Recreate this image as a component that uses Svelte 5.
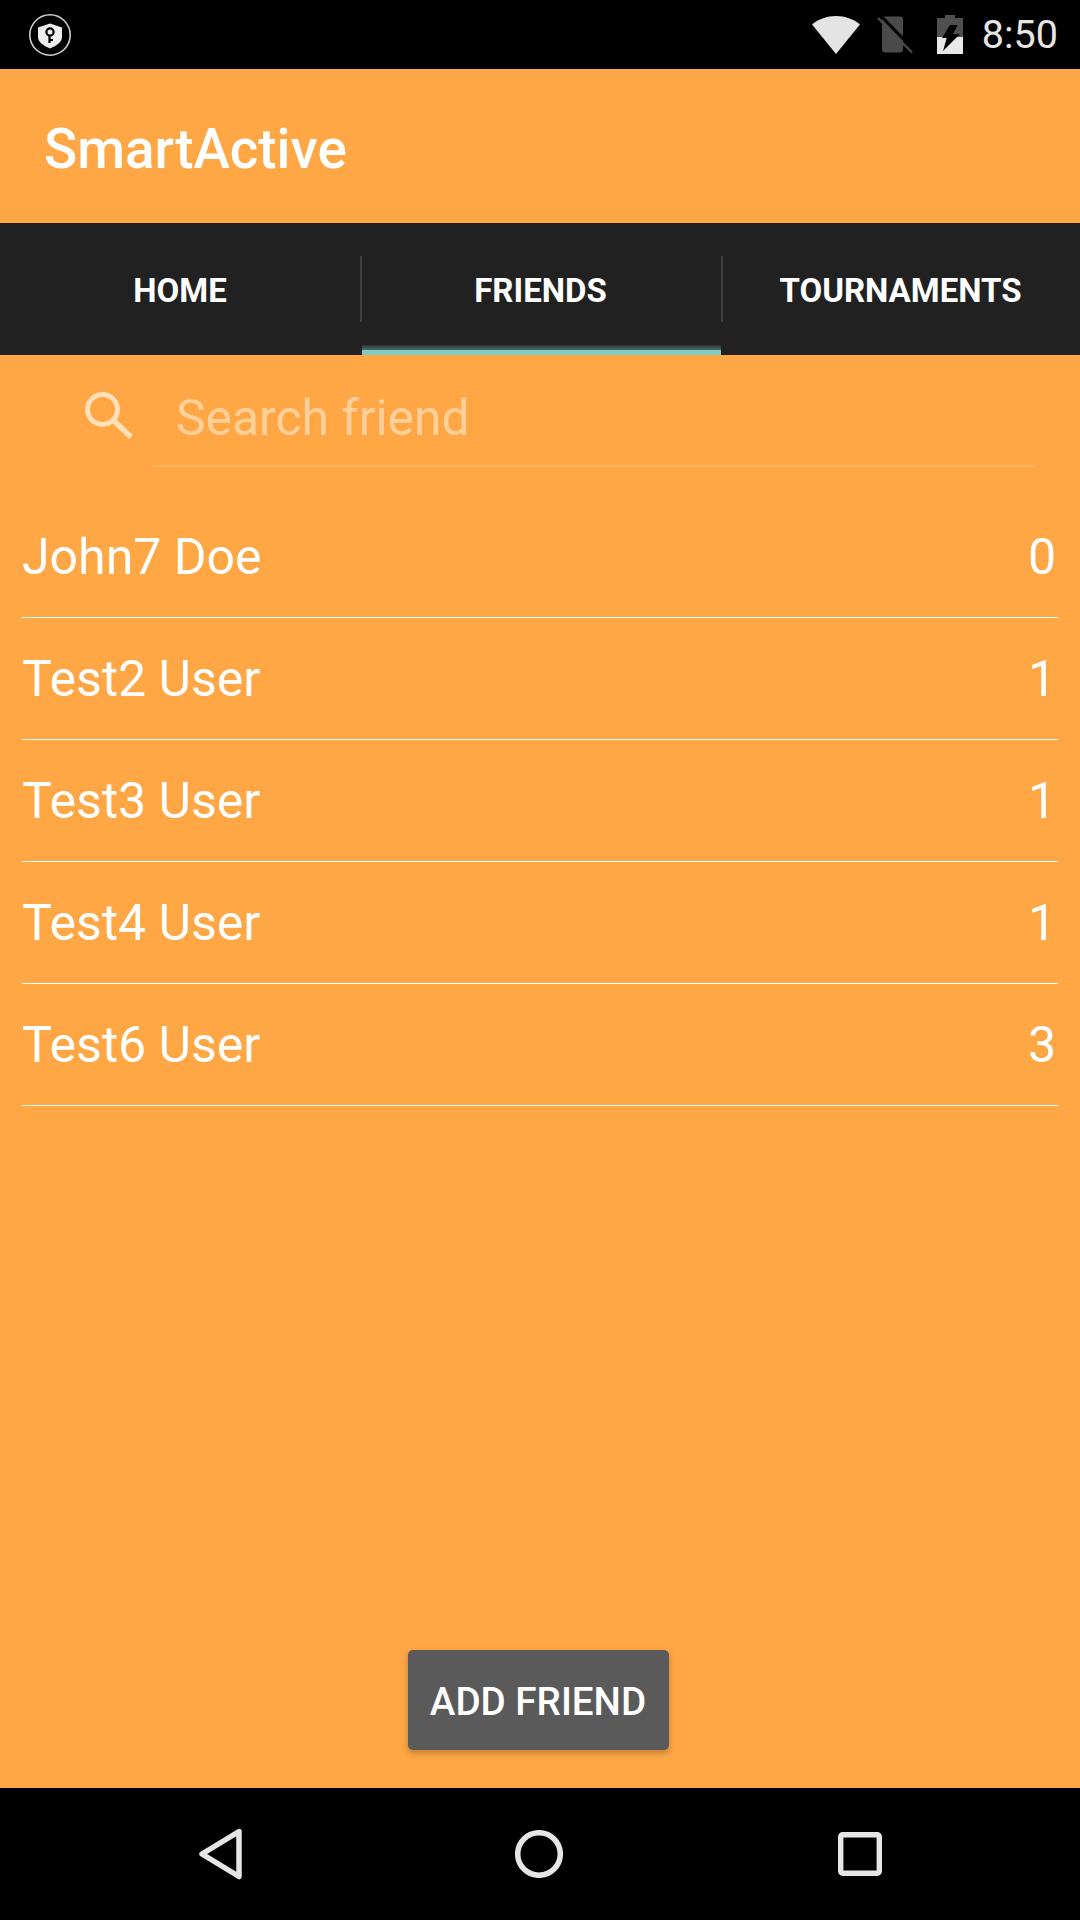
<script>
  const friends = [
    { name: 'John7 Doe', score: 0 },
    { name: 'Test2 User', score: 1 },
    { name: 'Test3 User', score: 1 },
    { name: 'Test4 User', score: 1 },
    { name: 'Test6 User', score: 3 }
  ];
  const tabs = ['HOME', 'FRIENDS', 'TOURNAMENTS'];
</script>

<div class="screen">
  <div class="status">
    <svg class="shield" width="44" height="44" viewBox="0 0 44 44">
      <circle cx="22" cy="22" r="20.2" fill="none" stroke="#cfcfcf" stroke-width="1.6" />
      <path d="M10 14.500 22 10.500l12 4v9.500c0 5-5 8.500-12 11.500-7-3-12-6.500-12-11.500z" fill="#eee" />
      <circle cx="22" cy="19" r="3.600" fill="none" stroke="#000" stroke-width="2.200" />
      <path d="M21.500 22v8M22 27h3" fill="none" stroke="#000" stroke-width="2.200" />
    </svg>
    <div class="spacer"></div>
    <svg class="wifi" width="48" height="38" viewBox="0 0 48 38">
      <path d="M0 8.500C6.500 3 15 0 24 0s17.500 3 24 8.500L24 38z" fill="#e4e4e4" />
    </svg>
    <svg class="sim" width="36" height="38" viewBox="0 0 36 38">
      <path d="M5 3.500a3 3 0 0 1 3-3h15a3 3 0 0 1 3 3v30a3 3 0 0 1-3 3H8a3 3 0 0 1-3-3z" fill="#4a4a4a" />
      <path d="M4 0 36 33" stroke="#000" stroke-width="3" fill="none" />
      <path d="M1 2 35 36.500" stroke="#4a4a4a" stroke-width="2.400" fill="none" />
    </svg>
    <svg class="battery" width="26" height="39" viewBox="0 0 26 39">
      <path d="M8 0h10v3h8v36H0V3h8z" fill="#4f4f4f" />
      <path d="M0 22h26v17H0z" fill="#e8e8e8" />
      <path d="M13 10h7.700L16 19h7L6 36l3.700-13H5z" fill="#000" />
    </svg>
    <span class="time">8:50</span>
  </div>

  <header class="toolbar">SmartActive</header>

  <nav class="tabs">
    {#each tabs as tab, i}
      <div class="tab" class:active={i === 1} class:divided={i > 0}>
        <span>{tab}</span>
      </div>
    {/each}
  </nav>

  <main class="content">
    <div class="search">
      <svg class="search-icon" width="50" height="50" viewBox="0 0 50 50">
        <circle cx="17.500" cy="17.500" r="15" fill="none" stroke="#ffe0b8" stroke-width="5" />
        <path d="M28 28 46 45" stroke="#ffe0b8" stroke-width="5.500" fill="none" />
      </svg>
      <div class="field">Search friend</div>
    </div>

    <ul class="list">
      {#each friends as f}
        <li>
          <span>{f.name}</span>
          <span>{f.score}</span>
        </li>
      {/each}
    </ul>

    <div class="actions">
      <button>ADD FRIEND</button>
    </div>
  </main>

  <footer class="nav">
    <svg width="46" height="52" viewBox="0 0 46 52">
      <path d="M41 3.500 4 26l37 22.500z" fill="none" stroke="#e6e6e6" stroke-width="5.500" stroke-linejoin="round" />
    </svg>
    <svg width="48" height="48" viewBox="0 0 48 48">
      <circle cx="24" cy="24" r="21.300" fill="none" stroke="#e6e6e6" stroke-width="5.500" />
    </svg>
    <svg width="44" height="44" viewBox="0 0 44 44">
      <rect x="2.700" y="2.700" width="38.600" height="38.600" rx="2" fill="none" stroke="#e6e6e6" stroke-width="5.400" />
    </svg>
  </footer>
</div>

<style>
  :global(body) { margin: 0; background: #ffa745; }
  .screen {
    width: 1080px;
    height: 1920px;
    display: flex;
    flex-direction: column;
    font-family: Roboto, "Liberation Sans", sans-serif;
    background: #ffa745;
    color: #fff;
    overflow: hidden;
  }
  .status {
    height: 69px;
    flex: none;
    background: #000;
    display: flex;
    align-items: center;
    padding: 0 22px 0 28px;
    box-sizing: border-box;
  }
  .spacer { flex: 1; }
  .wifi { margin-right: 17px; }
  .sim { margin-right: 24px; }
  .battery { margin-right: 19px; }
  .time { font-size: 39.500px; color: #e6e6e6; }
  .toolbar {
    height: 154px;
    flex: none;
    display: flex;
    align-items: center;
    padding: 6px 0 0 44px;
    box-sizing: border-box;
    font-size: 54.800px;
    font-weight: 500;
  }
  .tabs {
    height: 132px;
    flex: none;
    background: #212121;
    display: grid;
    grid-template-columns: 360px 361px 359px;
  }
  .tab {
    position: relative;
    display: flex;
    align-items: center;
    justify-content: center;
    padding-top: 2px;
    box-sizing: border-box;
    font-size: 33px;
    font-weight: 700;
  }
  .tab.divided::before {
    content: "";
    position: absolute;
    left: 0;
    top: 33px;
    height: 66px;
    width: 2px;
    background: #3f3f3f;
  }
  .tab.active::after {
    content: "";
    position: absolute;
    left: 2px;
    right: 0;
    bottom: 0;
    height: 10px;
    background: linear-gradient(to bottom, #2e3534 0, #4f6a67 50%, #80cbc4 50%);
  }
  .content { flex: 1; display: flex; flex-direction: column; }
  .search {
    height: 141px;
    flex: none;
    display: flex;
    padding-left: 85px;
    box-sizing: border-box;
  }
  .search-icon { margin-top: 37px; margin-right: 19px; flex: none; }
  .field {
    width: 882px;
    height: 112px;
    box-sizing: border-box;
    padding: 0 0 0 22px;
    line-height: 126px;
    font-size: 49.800px;
    color: #ffd09a;
    border-bottom: 2px solid #ffb55f;
  }
  .list { list-style: none; margin: 0; padding: 0 22px; }
  .list li {
    height: 122px;
    box-sizing: border-box;
    display: flex;
    justify-content: space-between;
    align-items: center;
    padding-right: 2px;
    font-size: 50px;
    border-bottom: 1px solid #fff;
  }
  .actions { margin-top: auto; display: flex; justify-content: center; padding: 0 4px 38px 0; }
  button {
    width: 261px;
    height: 100px;
    border: 0;
    border-radius: 5px;
    background: #5a5a5a;
    color: #fff;
    font: 500 38.600px Roboto, "Liberation Sans", sans-serif;
    box-shadow: 0 3px 6px rgba(0, 0, 0, 0.25);
    padding: 2px 0 0;
  }
  .nav {
    height: 132px;
    flex: none;
    background: #000;
    display: flex;
    align-items: center;
    padding: 0 0 0 198px;
    box-sizing: border-box;
  }
  .nav svg:nth-child(1) { margin-right: 271px; }
  .nav svg:nth-child(2) { margin-right: 275px; }
</style>
